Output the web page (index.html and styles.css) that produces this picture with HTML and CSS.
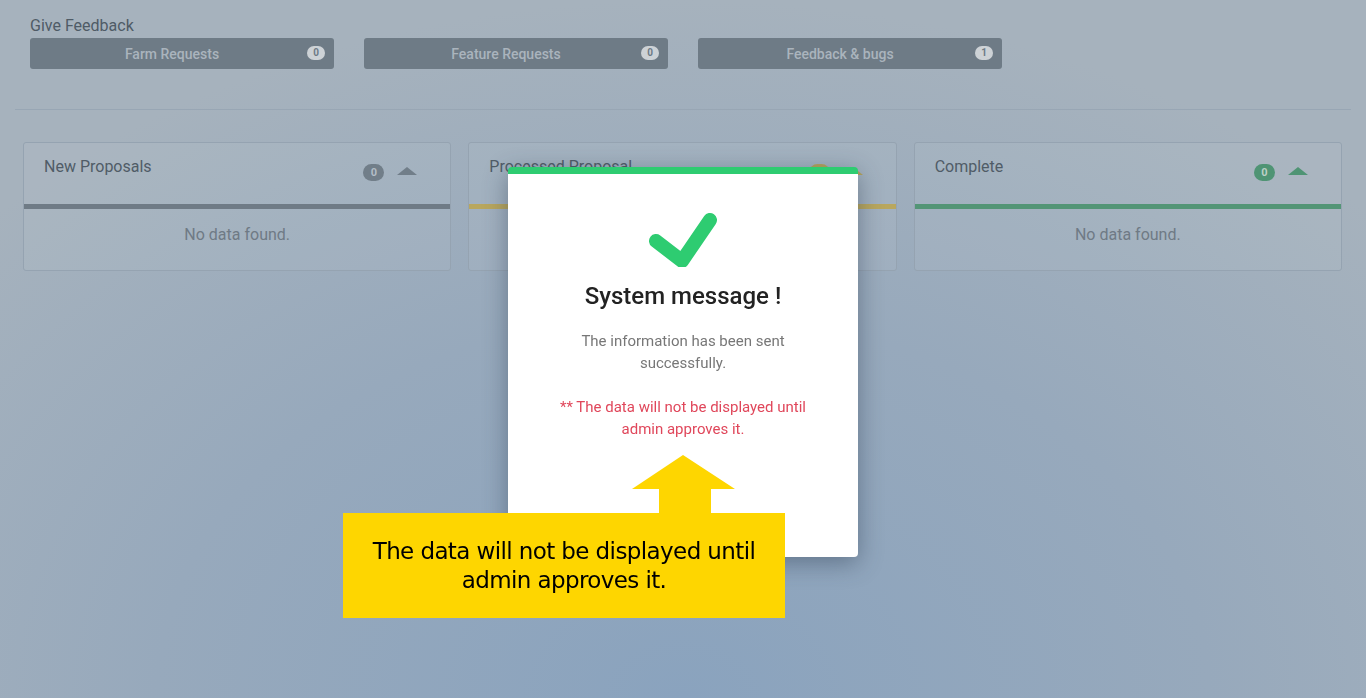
FILE: index.html
```html
<!DOCTYPE html>
<html lang="en">
<head>
  <meta charset="UTF-8">
  <meta name="viewport" content="width=device-width, initial-scale=1.0">
  <title>Proposals</title>
  <link rel="stylesheet" href="styles.css">
</head>
<body>

  <div class="page">
    <div class="feedback">
      <div class="feedback-title">Give Feedback</div>
      <div class="feedback-row">
        <div class="fb-btn">Farm Requests <span class="fb-badge">0</span></div>
        <div class="fb-btn">Feature Requests <span class="fb-badge">0</span></div>
        <div class="fb-btn">Feedback &amp; bugs <span class="fb-badge">1</span></div>
      </div>
    </div>

    <hr class="divider">

    <div class="board">
      <div class="card">
        <div class="card-head">
          <span class="card-title">New Proposals</span>
          <span class="card-tools">
            <span class="count gray">0</span>
            <span class="caret gray"></span>
          </span>
        </div>
        <div class="card-line gray"></div>
        <div class="card-body">No data found.</div>
      </div>

      <div class="card">
        <div class="card-head">
          <span class="card-title">Processed Proposal</span>
          <span class="card-tools">
            <span class="count yellow">0</span>
            <span class="caret yellow"></span>
          </span>
        </div>
        <div class="card-line yellow"></div>
        <div class="card-body">No data found.</div>
      </div>

      <div class="card">
        <div class="card-head">
          <span class="card-title">Complete</span>
          <span class="card-tools">
            <span class="count green">0</span>
            <span class="caret green"></span>
          </span>
        </div>
        <div class="card-line green"></div>
        <div class="card-body">No data found.</div>
      </div>
    </div>
  </div>

  <!-- success popup -->
  <div class="modal">
    <div class="modal-icon">
      <svg width="72" height="56" viewBox="0 0 72 56">
        <polyline points="9,30 35,50 63,9" fill="none" stroke="#2ecc71" stroke-width="14" stroke-linecap="round" stroke-linejoin="round"/>
      </svg>
    </div>
    <h3 class="modal-title">System message !</h3>
    <p class="modal-text">The information has been sent successfully.</p>
    <p class="modal-warn">** The data will not be displayed until admin approves it.</p>
  </div>

  <!-- annotation -->
  <div class="callout">
    <svg class="callout-arrow" width="442" height="58" viewBox="0 0 442 58">
      <polygon points="340,0 392,34 368,34 368,58 316,58 316,34 289,34" fill="#fed600"/>
    </svg>
    <div class="callout-box">The data will not be displayed until<br>admin approves it.</div>
  </div>

</body>
</html>
```

FILE: styles.css
```css
html {
  height: 100%;
  background: radial-gradient(ellipse 70% 100% at 50% 100%, #8aa3be 0%, #97a9bc 55%, #a6b2bd 100%);
}
body {
  font-family: Roboto, "Liberation Sans", Arial, sans-serif;
  margin: 0;
  padding: 0;
  min-height: 100%;
}
.page {
  padding: 16px 15px 0;
}
.feedback {
  padding-left: 15px;
}
.feedback-title {
  font-size: 16px;
  color: #4f5b66;
  line-height: 20px;
  margin-bottom: 2px;
}
.feedback-row {
  display: flex;
  gap: 30px;
}
.fb-btn {
  width: 304px;
  height: 31px;
  box-sizing: border-box;
  padding-right: 20px;
  background-color: #6e7b86;
  border-radius: 3px;
  color: #aab4bd;
  font-size: 14px;
  font-weight: 500;
  display: flex;
  align-items: center;
  justify-content: center;
  position: relative;
}
.fb-badge {
  position: absolute;
  right: 9px;
  top: 8px;
  background-color: #cdd2d6;
  color: #6e7b86;
  font-size: 10px;
  font-weight: bold;
  width: 18px;
  height: 14px;
  line-height: 14px;
  border-radius: 7px;
  text-align: center;
}
.divider {
  border: none;
  border-top: 1px solid #98a6b4;
  margin: 40px 0 32px;
}
.board {
  display: grid;
  grid-template-columns: repeat(3, 1fr);
  gap: 17px;
  padding: 0 9px 0 8px;
}
.card {
  border: 1px solid #95a3b1;
  border-radius: 3px;
  background-color: rgba(255, 255, 255, 0.05);
}
.card-head {
  height: 61px;
  display: flex;
  justify-content: space-between;
  align-items: flex-start;
  padding: 14px 33px 0 20px;
  box-sizing: border-box;
}
.card-title {
  font-size: 16px;
  color: #505c67;
}
.card-tools {
  display: flex;
  align-items: center;
  gap: 13px;
  margin-top: 7px;
}
.count {
  width: 21px;
  height: 17px;
  border-radius: 9px;
  font-size: 11px;
  font-weight: bold;
  line-height: 17px;
  text-align: center;
  color: #b3bdc6;
}
.count.gray { background-color: #717e89; }
.count.yellow { background-color: #b4a35c; }
.count.green { background-color: #4f9474; color: #bcd0c5; }
.caret {
  width: 0;
  height: 0;
  border-left: 10px solid transparent;
  border-right: 10px solid transparent;
  border-bottom: 8px solid #717e89;
  margin-top: -4px;
}
.caret.gray { border-bottom-color: #717e89; }
.caret.yellow { border-bottom-color: #b4a35c; }
.caret.green { border-bottom-color: #4f9474; }
.card-line {
  height: 5px;
}
.card-line.gray { background-color: #6f7b86; }
.card-line.yellow { background-color: #b9a75e; }
.card-line.green { background-color: #539576; }
.card-body {
  height: 61px;
  box-sizing: border-box;
  padding-top: 16px;
  line-height: 20px;
  text-align: center;
  font-size: 16px;
  color: #6f7a85;
}
.modal {
  position: fixed;
  left: 508px;
  top: 167px;
  width: 350px;
  height: 390px;
  box-sizing: border-box;
  background-color: white;
  border-top: 7px solid #2ecc71;
  border-radius: 4px;
  box-shadow: 0 6px 24px rgba(40, 55, 75, 0.45);
  text-align: center;
  padding: 37px 40px 0;
}
.modal-icon {
  height: 56px;
}
.modal-title {
  font-size: 24px;
  font-weight: 500;
  color: #222;
  margin: 14px 0 19px;
  line-height: 30px;
}
.modal-text {
  font-size: 15px;
  line-height: 22px;
  color: #777;
  margin: 0 0 22px;
  padding: 0 8px;
}
.modal-warn {
  font-size: 15px;
  line-height: 22px;
  color: #e0475b;
  margin: 0 -10px;
}
.callout {
  position: fixed;
  left: 343px;
  top: 455px;
  width: 442px;
}
.callout-arrow {
  display: block;
}
.callout-box {
  background-color: #fed600;
  height: 105px;
  box-sizing: border-box;
  padding-top: 24px;
  text-align: center;
  font-family: "DejaVu Sans", Verdana, sans-serif;
  font-size: 23px;
  letter-spacing: -0.6px;
  line-height: 29px;
  color: #000;
}
```
